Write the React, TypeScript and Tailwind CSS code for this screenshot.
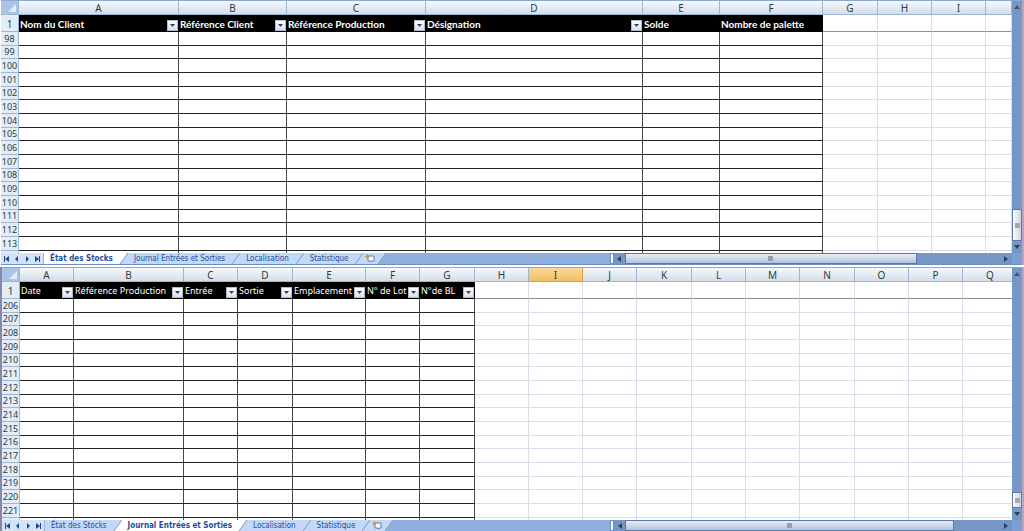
import { useState } from 'react'
import clsx from 'clsx'

type Column = {
  letter: string
  width?: string
  title?: string
  filter?: boolean
  data?: boolean
}

type SheetWindow = {
  name: string
  columns: Column[]
  firstRow: number
  minWidth?: string
  bold?: boolean
  selected?: string
  active: string
  thumb: string
  vThumb: string
}

const TABS = ['État des Stocks', 'Journal Entrées et Sorties', 'Localisation', 'Statistique']
const ROWS_VISIBLE = 16

const STOCK: SheetWindow = {
  name: 'stocks',
  firstRow: 98,
  bold: true,
  active: 'État des Stocks',
  thumb: 'w-[78%]',
  vThumb: 'h-[32px] mb-1',
  columns: [
    { letter: 'A', width: 'w-[160px]', title: 'Nom du Client', filter: true, data: true },
    { letter: 'B', width: 'w-[108px]', title: 'Référence Client', filter: true, data: true },
    { letter: 'C', width: 'w-[139px]', title: 'Référence Production', filter: true, data: true },
    { letter: 'D', width: 'w-[217px]', title: 'Désignation', filter: true, data: true },
    { letter: 'E', width: 'w-[77px]', title: 'Solde', data: true },
    { letter: 'F', width: 'w-[103px]', title: 'Nombre de palette', data: true },
    { letter: 'G', width: 'w-[55px]' },
    { letter: 'H', width: 'w-[54px]' },
    { letter: 'I', width: 'w-[54px]' },
    { letter: '' },
  ],
}

const JOURNAL: SheetWindow = {
  name: 'journal',
  firstRow: 206,
  minWidth: 'min-w-[1016px]',
  selected: 'I',
  active: 'Journal Entrées et Sorties',
  thumb: 'w-[88%]',
  vThumb: 'h-[16px] mb-1',
  columns: [
    { letter: 'A', width: 'w-[54px]', title: 'Date', filter: true, data: true },
    { letter: 'B', width: 'w-[110px]', title: 'Référence Production', filter: true, data: true },
    { letter: 'C', width: 'w-[54px]', title: 'Entrée', filter: true, data: true },
    { letter: 'D', width: 'w-[55px]', title: 'Sortie', filter: true, data: true },
    { letter: 'E', width: 'w-[73px]', title: 'Emplacement', filter: true, data: true },
    { letter: 'F', width: 'w-[54px]', title: 'N° de Lot', filter: true, data: true },
    { letter: 'G', width: 'w-[55px]', title: 'N°de BL', filter: true, data: true },
    { letter: 'H', width: 'w-[54px]' },
    { letter: 'I', width: 'w-[54px]' },
    { letter: 'J', width: 'w-[54px]' },
    { letter: 'K', width: 'w-[55px]' },
    { letter: 'L', width: 'w-[54px]' },
    { letter: 'M', width: 'w-[54px]' },
    { letter: 'N', width: 'w-[55px]' },
    { letter: 'O', width: 'w-[54px]' },
    { letter: 'P', width: 'w-[54px]' },
    { letter: 'Q' },
  ],
}

function FilterButton({ label }: { label: string }) {
  return (
    <button
      type="button"
      aria-label={`Filtrer ${label}`}
      className="flex size-[11px] shrink-0 items-center justify-center border border-[#b4bccb] bg-linear-to-b from-white to-[#d9dfea]"
    >
      <svg viewBox="0 0 5 3" className="h-[3px] w-[5px]" fill="#2b3f7d">
        <path d="M0 0h5L2.5 3z" />
      </svg>
    </button>
  )
}

function Grid({ sheet }: { sheet: SheetWindow }) {
  const { columns, firstRow, bold, selected } = sheet
  const rows = Array.from({ length: ROWS_VISIBLE }, (_, i) => firstRow + i)

  return (
    <table className={clsx('w-full table-fixed border-separate border-spacing-0', sheet.minWidth)}>
      <colgroup>
        <col className="w-[18px]" />
        {columns.map(c => <col key={c.letter} className={c.width} />)}
      </colgroup>
      <thead>
        <tr>
          <th className="h-[14px] border-r border-b border-[#9eb6ce] bg-[#a9c4e9] p-0">
            <svg viewBox="0 0 17 13" className="block h-[13px] w-[17px]">
              <path d="M15 3v8H7z" fill="#e4ecf7" />
            </svg>
          </th>
          {columns.map(c => (
            <th
              key={c.letter}
              scope="col"
              className={clsx(
                'h-[14px] border-r border-b p-0 text-center text-[10px] leading-3 font-normal text-[#27413e]',
                c.letter === selected
                  ? 'border-[#e59a3c] bg-linear-to-b from-[#f9d99f] to-[#f1bf5f]'
                  : 'border-[#9eb6ce] bg-linear-to-b from-[#f6f9fc] to-[#d5dde9]'
              )}
            >
              {c.letter}
            </th>
          ))}
        </tr>
      </thead>
      <tbody>
        {/* Frozen title row */}
        <tr>
          <th scope="row" className="h-[17px] border-r border-b border-r-[#9eb6ce] border-b-[#9eb6ce] bg-[#e4ecf7] p-0 pt-[2px] text-center text-[10px] leading-3 font-normal text-[#27413e]">
            1
          </th>
          {columns.map(c => c.data ? (
            <th
              key={c.letter}
              scope="col"
              className={clsx(
                'h-[17px] bg-black p-0 px-[1px] text-left leading-3 text-white',
                bold ? "font-['Lato','Open_Sans',sans-serif] text-[10px] font-bold" : 'text-[9px] font-normal'
              )}
            >
              <div className="flex items-end justify-between pt-[1px]">
                <span className="pb-[1px] whitespace-nowrap">{c.title}</span>
                {c.filter && <FilterButton label={c.title ?? ''} />}
              </div>
            </th>
          ) : (
            <td key={c.letter} className="h-[17px] border-r border-b border-r-[#d9deea] border-b-[#909090] p-0" />
          ))}
        </tr>
        {rows.map((n, i) => (
          <tr key={n}>
            <th
              scope="row"
              className={clsx(
                'border-r border-b border-[#9eb6ce] bg-[#e4ecf7] p-0 text-center text-[9px] leading-3 font-normal text-[#27413e]',
                i % 3 === 1 ? 'h-[13px]' : 'h-[14px]'
              )}
            >
              {n}
            </th>
            {columns.map(c => (
              <td key={c.letter} className={clsx('border-r border-b p-0', c.data ? 'border-r-[#484848] border-b-[#222222]' : 'border-[#d9deea]')} />
            ))}
          </tr>
        ))}
        {/* Top of the next row, cut off by the tab bar */}
        <tr>
          <th className="h-[2px] border-r border-[#9eb6ce] bg-[#e4ecf7] p-0" />
          {columns.map(c => (
            <td key={c.letter} className={clsx('h-[2px] border-r p-0', c.data ? 'border-[#484848]' : 'border-[#d9deea]')} />
          ))}
        </tr>
      </tbody>
    </table>
  )
}

function VerticalScrollbar({ thumb }: { thumb: string }) {
  return (
    <div className="flex w-[10px] shrink-0 flex-col items-center bg-[#7696c6] py-1">
      <svg viewBox="0 0 6 4" className="h-1 w-[6px]" fill="#44546f">
        <path d="M0 4L3 0l3 4z" />
      </svg>
      <div className="flex-1" />
      <div className={clsx('flex w-[10px] items-center justify-center border border-[#5a78a8] bg-linear-to-r from-white to-[#c9d3e4]', thumb)}>
        <span className="h-[5px] w-[5px] bg-[#a2a8b2]" />
      </div>
      <svg viewBox="0 0 6 4" className="h-1 w-[6px]" fill="#2f3f5c">
        <path d="M0 0l3 4 3-4z" />
      </svg>
    </div>
  )
}

const NAV = [
  { label: 'Première feuille', d: 'M0 0h1v6H0zM5 0v6L1 3z' },
  { label: 'Feuille précédente', d: 'M4 0v6L1 3z' },
  { label: 'Feuille suivante', d: 'M1 0v6l3-3z' },
  { label: 'Dernière feuille', d: 'M0 0v6l4-3zM4 0h1v6H4z' },
]

function Slant({ left, right }: { left: string; right: string }) {
  return (
    <svg viewBox="0 0 9 11" className="h-[11px] w-[9px] shrink-0">
      <path d="M0 0h9L1 11H0z" fill={left} />
      <path d="M9 0v11H1z" fill={right} />
      <path d="M9 0L1 11" stroke="#7f9cc8" fill="none" />
    </svg>
  )
}

function SheetTabs({ active, onSelect }: { active: string; onSelect: (name: string) => void }) {
  const fill = (name?: string) => (name === active ? '#ffffff' : '#c3d8f6')

  return (
    <div className="flex min-w-0 flex-1 items-stretch bg-[#8fb0de]">
      <div className="flex w-[43px] shrink-0 items-center justify-around border-r border-[#9eb6ce] bg-[#d3e2f7]">
        {NAV.map(b => (
          <button key={b.label} type="button" aria-label={b.label}>
            <svg viewBox="0 0 5 6" className="h-[6px] w-[5px]" fill="#1e4a8c">
              <path d={b.d} />
            </svg>
          </button>
        ))}
      </div>
      {TABS.map((name, i) => (
        <div key={name} className="flex shrink-0">
          <button
            type="button"
            onClick={() => onSelect(name)}
            className={clsx(
              "px-[6px] font-['DejaVu_Sans_Condensed','DejaVu_Sans',sans-serif] text-[8px] leading-[11px] whitespace-nowrap text-[#1f4e9a]",
              name === active ? 'bg-white font-bold' : 'bg-[#c3d8f6]'
            )}
          >
            {name}
          </button>
          <Slant left={fill(name)} right={fill(TABS[i + 1])} />
        </div>
      ))}
      <button type="button" aria-label="Insérer une feuille" className="shrink-0 bg-[#c3d8f6] px-[2px]">
        <svg viewBox="0 0 10 9" className="h-[9px] w-[10px]">
          <path d="M3 2h6v5H7L6 8V7H3z" fill="#f4f7fc" stroke="#6680ab" />
          <path d="M2.5 0v5M0 2.5h5M1 1l3 3M4 1L1 4" stroke="#e39a2d" fill="none" />
        </svg>
      </button>
      <Slant left="#c3d8f6" right="#8fb0de" />
    </div>
  )
}

function HorizontalScrollbar({ thumb }: { thumb: string }) {
  return (
    <div className="flex w-[39%] shrink-0 items-stretch bg-[#7696c6]">
      <div className="flex w-[11px] items-center justify-center">
        <svg viewBox="0 0 4 6" className="h-[6px] w-1" fill="#2f3f5c"><path d="M4 0v6L0 3z" /></svg>
      </div>
      <div className="flex flex-1">
        <div className={clsx('flex items-center justify-center border border-[#5a78a8] bg-linear-to-b from-[#e9eef6] to-[#b3c2da]', thumb)}>
          <span className="h-[5px] w-[5px] bg-[#979da8]" />
        </div>
      </div>
      <div className="flex w-[13px] items-center justify-center">
        <svg viewBox="0 0 4 6" className="h-[6px] w-1" fill="#2f3f5c"><path d="M0 0v6l4-3z" /></svg>
      </div>
    </div>
  )
}

function Workbook({ sheet }: { sheet: SheetWindow }) {
  const [active, setActive] = useState(sheet.active)

  return (
    <section aria-label={sheet.name} className="border-t border-r-2 border-t-[#8aa9d0] border-r-[#b7a6bd]">
      <div className="flex">
        <div className="min-w-0 flex-1 overflow-hidden">
          <Grid sheet={sheet} />
        </div>
        <VerticalScrollbar thumb={sheet.vThumb} />
      </div>
      <div className="flex h-3 items-stretch border-b border-[#6a8fc4]">
        <SheetTabs active={active} onSelect={setActive} />
        <div className="w-1 shrink-0 border border-[#6a8fc4] bg-white" />
        <HorizontalScrollbar thumb={sheet.thumb} />
        <div className="w-[10px] shrink-0 bg-[#7c9fd6]" />
      </div>
    </section>
  )
}

export default function App() {
  return (
    <main className="bg-white font-['Noto_Sans','Open_Sans',sans-serif]">
      <div className="pl-[1px]">
        <Workbook sheet={STOCK} />
      </div>
      <div className="mt-[2px] border-l-2 border-[#8a86a8]">
        <Workbook sheet={JOURNAL} />
      </div>
    </main>
  )
}
